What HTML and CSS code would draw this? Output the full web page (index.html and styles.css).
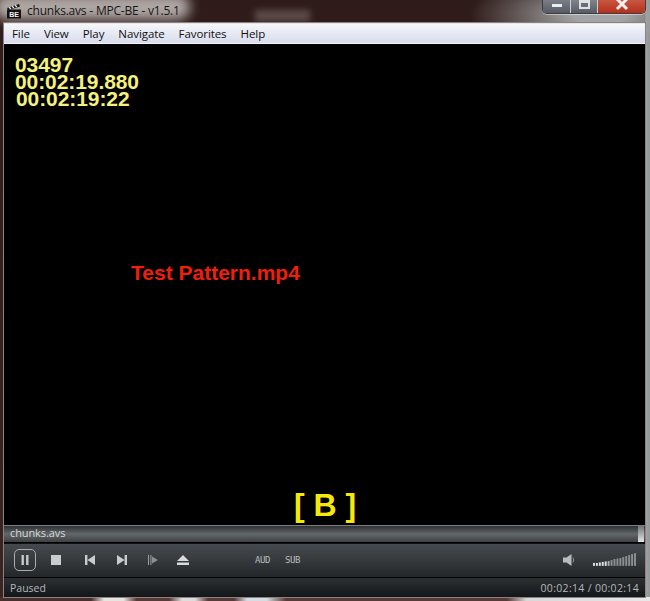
FILE: index.html
```html
<!DOCTYPE html>
<html lang="en">
<head>
<meta charset="utf-8">
<title>chunks.avs - MPC-BE - v1.5.1</title>
<link rel="stylesheet" href="styles.css">
</head>
<body>
<div class="frame">
  <div class="smudge"></div>
  <header class="titlebar">
    <svg class="app-icon" width="16" height="16" viewBox="0 0 16 16">
      <path d="M1 5 L13 1 L14 3.4 L2 7 Z" fill="#111"/>
      <path d="M3 4.4 L5 5.8 M6 3.4 L8 4.8 M9 2.4 L11 3.8" stroke="#eee" stroke-width="1.3"/>
      <rect x="1" y="6.500" width="14" height="9" fill="#111"/>
      <text x="8" y="14" class="app-icon-text" text-anchor="middle">BE</text>
    </svg>
    <span class="title-text">chunks.avs - MPC-BE - v1.5.1</span>
    <div class="caption-buttons">
      <div class="cap cap-min"><span class="glyph-min"></span></div>
      <div class="cap cap-max"><span class="glyph-max"></span></div>
      <div class="cap cap-close">
        <svg width="16" height="12" viewBox="0 0 16 12"><path d="M3 0 L13 10 M13 0 L3 10" stroke="#f4f0ee" stroke-width="3"/></svg>
      </div>
    </div>
  </header>
  <div class="window">
    <nav class="menu">
      <span class="menu-item">File</span>
      <span class="menu-item">View</span>
      <span class="menu-item">Play</span>
      <span class="menu-item">Navigate</span>
      <span class="menu-item">Favorites</span>
      <span class="menu-item">Help</span>
    </nav>
    <main class="video">
      <div class="counters">
        <div class="c1">03497</div>
        <div class="c2">00:02:19.880</div>
        <div class="c3">00:02:19:22</div>
      </div>
      <div class="clip-name">Test Pattern.mp4</div>
      <div class="marker">[ B ]</div>
    </main>
    <div class="playlist-bar">
      <span class="playlist-name">chunks.avs</span>
      <span class="playlist-thumb"></span>
    </div>
    <div class="toolbar">
      <div class="pause-btn">
        <svg width="10" height="10" viewBox="0 0 10 10"><path d="M1.500 0h2.400v10H1.500zM6.100 0h2.400v10H6.100z" fill="#c4c8ca"/></svg>
      </div>
      <svg class="ico ico-stop" width="10" height="10" viewBox="0 0 10 10"><rect width="10" height="10" fill="#c9cccd"/></svg>
      <svg class="ico ico-prev" width="10" height="10" viewBox="0 0 10 10"><path d="M0 0h2.400v10H0zM2.400 5L10 0v10z" fill="#c9cccd"/></svg>
      <svg class="ico ico-next" width="10" height="10" viewBox="0 0 10 10"><path d="M10 0H7.600v10H10zM7.600 5L0 0v10z" fill="#c9cccd"/></svg>
      <svg class="ico ico-step" width="10" height="10" viewBox="0 0 10 10"><path d="M0 0h1v10H0zM2.400 0h1v10h-1z" fill="#9da1a3"/><path d="M4 1.500L10 5L4 8.500z" fill="#8b8f91"/></svg>
      <svg class="ico ico-eject" width="12" height="10" viewBox="0 0 12 10"><path d="M6 0L12 6H0zM0 7.500h12V10H0z" fill="#d8dadb"/></svg>
      <span class="tag tag-aud">AUD</span>
      <span class="tag tag-sub">SUB</span>
      <svg class="ico ico-speaker" width="13" height="14" viewBox="0 0 13 14"><path d="M0 4.500h3.500L8.500 1v12L3.500 9.500H0z" fill="#b9bcbe"/><path d="M10 4.500q1.400 2.500 0 5" stroke="#8f9395" fill="none"/></svg>
      <svg class="volume" width="43" height="14" viewBox="0 0 44 14" fill="#a9adaf">
        <rect x="0" y="10" width="2" height="3" fill="#dfe1e2"/><rect x="3" y="10" width="2" height="3" fill="#dfe1e2"/><rect x="6" y="9.500" width="2" height="3.500" fill="#dfe1e2"/><rect x="9" y="9" width="2" height="4" fill="#dfe1e2"/><rect x="12" y="8.500" width="2" height="4.500" fill="#dfe1e2"/><rect x="15" y="8" width="2" height="5"/><rect x="18" y="7" width="2" height="6" fill="#8b8f91"/><rect x="21" y="6" width="2" height="7" fill="#8b8f91"/><rect x="24" y="5.500" width="2" height="7.500" fill="#8b8f91"/><rect x="27" y="5" width="2" height="8" fill="#8b8f91"/><rect x="30" y="4" width="2" height="9" fill="#8b8f91"/><rect x="33" y="3" width="2" height="10" fill="#8b8f91"/><rect x="36" y="2" width="2" height="11" fill="#8b8f91"/><rect x="39" y="1" width="2" height="12" fill="#8b8f91"/><rect x="42" y="0" width="2" height="13" fill="#8b8f91"/>
      </svg>
    </div>
    <footer class="status">
      <span>Paused</span>
      <span class="times">00:02:14 / 00:02:14</span>
    </footer>
  </div>
</div>
</body>
</html>
```
FILE: styles.css
```css
* { box-sizing: border-box; }
html, body { margin: 0; height: 100%; }
body { width: 650px; height: 601px; overflow: hidden; background: #3a2422; }

.frame {
  position: relative;
  width: 650px;
  height: 601px;
  padding: 0 5px 4px 4px;
  display: flex;
  flex-direction: column;
  overflow: hidden;
  background:
    linear-gradient(90deg, rgba(160,160,160,0) 645px, #a2a2a2 646px, #9a9a9a 648px, #83a09c 650px),
    linear-gradient(180deg, #2f1c1a 0, #3b2523 100%);
}
.frame::before {
  content: "";
  position: absolute;
  left: 470px; top: -30px;
  width: 260px; height: 90px;
  background: radial-gradient(closest-side, #a4a4a4 20%, rgba(150,150,150,.55) 60%, rgba(90,80,78,0) 100%);
}
.frame::after {
  content: "";
  position: absolute;
  left: 0; right: 0; bottom: 0;
  height: 4px;
  background: linear-gradient(90deg,
    #4a2f2c 0, #4a2f2c 14%, #e8e4e0 16%, #e8e4e0 19%, #5a3a36 21%,
    #5a3a36 26%, #ddd 28%, #ddd 30%, #5a3a36 32%,
    #5a3a36 36%, #d6dce4 38%, #d6dce4 41%, #5a3a36 44%,
    #5a3a36 78%, #d8d8d8 81%, #e8e8e8 100%);
}
.smudge {
  position: absolute;
  left: 255px; top: 10px;
  width: 55px; height: 12px;
  background: #5a4a48;
  filter: blur(3px);
}

.titlebar {
  position: relative;
  z-index: 1;
  height: 23px;
  flex: none;
  display: flex;
  align-items: flex-start;
  padding: 3px 0 0 2px;
}
.titlebar::before {
  content: "";
  position: absolute;
  left: -10px; top: -6px;
  width: 196px; height: 26px;
  border-radius: 14px;
  background: rgba(225,220,218,.72);
  filter: blur(6px);
}
.app-icon { position: relative; flex: none; }
.app-icon-text {
  font: bold 7px "Liberation Sans", sans-serif;
  fill: #f2f2f2;
}
.title-text {
  position: relative;
  margin-left: 5px;
  font: 12px/16px "Open Sans", "Noto Sans", sans-serif;
  letter-spacing: -.2px;
  color: #161616;
  white-space: nowrap;
}
.caption-buttons {
  position: absolute;
  right: -1px; top: -1px;
  display: flex;
  height: 15px;
  border: 1px solid #3a3d42;
  border-top: 0;
  border-radius: 0 0 5px 5px;
  box-shadow: 0 1px 0 rgba(255,255,255,.45), inset 0 0 0 1px rgba(255,255,255,.3);
  overflow: hidden;
}
.cap {
  display: flex;
  justify-content: center;
  align-items: flex-start;
  height: 100%;
}
.cap-min { width: 28px; background: linear-gradient(#7d8189, #565a64); padding-top: 5px; border-right: 1px solid #d0d0d0; }
.cap-max { width: 27px; background: linear-gradient(#83868d, #585c66); padding-top: 1px; border-right: 1px solid #d0d0d0; }
.cap-close { width: 47px; background: linear-gradient(#c85a44, #b52f1c); }
.glyph-min { display: block; width: 10px; height: 3px; background: #eceded; }
.glyph-max { display: block; width: 11px; height: 9px; border: 2px solid #dfe0e2; border-top-width: 3px; background: #6a6d75; }

.window {
  position: relative;
  z-index: 1;
  flex: 1;
  min-height: 0;
  display: flex;
  flex-direction: column;
  background: #000;
  outline: 1px solid #8a8382;
}

.menu {
  flex: none;
  height: 21px;
  display: flex;
  align-items: center;
  gap: 14px;
  padding-left: 8px;
  border-top: 1px solid #e6e6e6;
  border-bottom: 1px solid #f4f5f9;
  background: linear-gradient(#f7f8fc 0, #eef0f7 25%, #d8dcec 100%);
  font: 11.500px/20px "Open Sans", "Noto Sans", sans-serif;
  letter-spacing: -.08px;
  color: #101010;
}

.video {
  position: relative;
  flex: 1;
  min-height: 0;
  background: #000;
  font-family: "Liberation Sans", Arial, sans-serif;
  font-weight: bold;
}
.counters {
  position: absolute;
  left: 11px; top: 12px;
  font-size: 21px;
  line-height: 17px;
  letter-spacing: -.08px;
  color: #f4f17c;
}
.c3 { padding-left: 1px; }
.clip-name {
  position: absolute;
  left: 127px; top: 217px;
  font-size: 21px;
  line-height: 24px;
  color: #f01f0a;
}
.marker {
  position: absolute;
  left: 290px; top: 443px;
  font-size: 32px;
  line-height: 36px;
  color: #f6e90a;
}

.playlist-bar {
  flex: none;
  height: 17px;
  display: flex;
  justify-content: space-between;
  align-items: stretch;
  border-top: 1px solid #7b7e80;
  background: linear-gradient(#2f3234 0, #62676a 50%, #3d4143 100%);
  color: #d7dadb;
  font: 11px/13px "Open Sans", "Noto Sans", sans-serif;
  padding-left: 6px;
}
.playlist-name { letter-spacing: -.1px; }
.playlist-thumb {
  width: 6px;
  margin-right: 1px;
  background: linear-gradient(#6f7577, #e4e6e6);
}

.toolbar {
  flex: none;
  height: 34px;
  display: flex;
  align-items: center;
  padding: 0 0 2px 10px;
  margin-top: 1px;
  border-top: 1px solid #101112;
  background: linear-gradient(#454a4e 0, #36393c 50%, #24272a 100%);
}
.pause-btn {
  width: 22px; height: 22px;
  flex: none;
  display: flex;
  align-items: center;
  justify-content: center;
  border: 1px solid #a9adaf;
  border-radius: 5px;
}
.ico { flex: none; }
.ico-stop { margin-left: 15px; }
.ico-prev { margin-left: 24px; }
.ico-next { margin-left: 22px; }
.ico-step { margin-left: 21px; }
.ico-eject { margin-left: 19px; }
.tag {
  font: 9px/12px "DejaVu Sans Mono", monospace;
  letter-spacing: -.4px;
  color: #b9bdbf;
}
.tag-aud { margin-left: 66px; }
.tag-sub { margin-left: 15px; }
.ico-speaker { margin-left: 263px; }
.volume { margin-left: 17px; flex: none; }

.status {
  flex: none;
  height: 20px;
  display: flex;
  justify-content: space-between;
  align-items: center;
  padding: 0 6px;
  border-top: 1px solid #000;
  background: linear-gradient(#2c3033 0, #14171a 100%);
  color: #b4b8ba;
  font: 10.500px/16px "Open Sans", "Noto Sans", sans-serif;
}
.times { letter-spacing: .32px; }
```
